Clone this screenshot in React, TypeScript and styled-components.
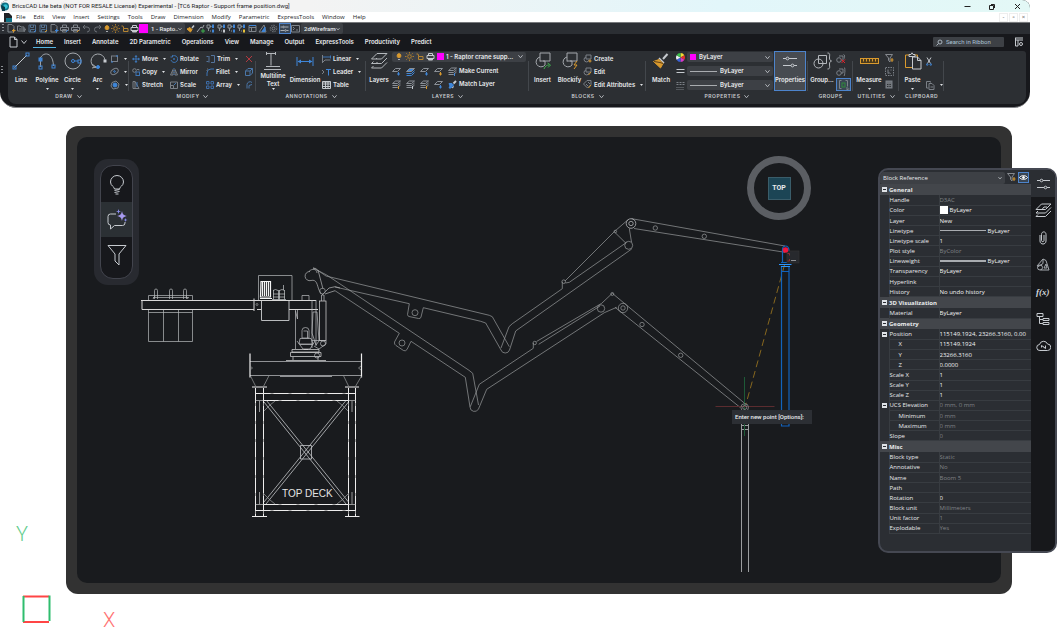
import React from "react";
import styled, { createGlobalStyle, css } from "styled-components";

const W = "#c6cacf";
const B = "#3f86d8";
const O = "#d99a2e";
const G = "#3fae4c";
const R = "#d2363c";

const uiFont = `"Open Sans", "Noto Sans", sans-serif`;
const titleFont = `Roboto, "Open Sans", sans-serif`;
const ribbonFont = `Inter, Roboto, sans-serif`;

const GlobalStyle = createGlobalStyle`
  * { box-sizing: border-box; }
  body { margin: 0; background: #fff; font: 500 6px/8px ${uiFont}; color: #e8eaec; }
  button, select, input { font: inherit; color: inherit; border: 0; padding: 0; margin: 0; background: none; }
  select { appearance: none; outline: 0; min-width: 0; }
  svg { display: block; flex: none; }
`;

const Page = styled.div`
  position: relative;
  min-height: 100vh;
  overflow: hidden;
`;

/* ---------- application window ---------- */

const AppWindow = styled.header`
  margin-right: 28px;
  overflow: hidden;
  background: #17181c;
  border-bottom: 1px solid #85868a;
  border-radius: 8px 8px 16px 16px;
  padding-bottom: 3px;
`;

const TitleBar = styled.div`
  display: flex;
  align-items: center;
  height: 12px;
  padding: 0 8px 0 1px;
  gap: 3px;
  color: #1b1d1f;
  font: 400 6px/8px ${titleFont};
  background: linear-gradient(90deg, #f3f3f3 30%, #e2f6fa 70%, #e3f8f6);
`;

const Spacer = styled.div`
  flex: 1;
`;

const WindowButtons = styled.div`
  display: flex;
  gap: 16px;
`;

const IconButton = styled.button<{ $w?: number; $h?: number; $on?: boolean }>`
  display: flex;
  align-items: center;
  justify-content: center;
  flex: none;
  width: ${(p) => p.$w ?? 9}px;
  height: ${(p) => p.$h ?? 9}px;
  ${(p) =>
    p.$on &&
    css`
      background: #3a4654;
      box-shadow: inset 0 0 0 1px #4d84cc;
    `}
`;

const MenuBar = styled.nav`
  display: flex;
  align-items: center;
  height: 10px;
  padding: 0 2px 0 4px;
  background: #fff;
  color: #1b1d1f;
  font-weight: 400;
`;

const MenuItem = styled.button`
  padding: 0 4px;
`;

const DocButton = styled.button`
  width: 9px;
  height: 9px;
  margin-left: 1px;
  line-height: 6px;
  border: 1px solid #eee;
  color: #555;
`;

const QuickBar = styled.div`
  display: flex;
  align-items: center;
  height: 12px;
  padding-left: 2px;
  border-top: 1px solid #77797c;
  background: #2b2e33;
  font-family: ${titleFont};
`;

const QuickGroup = styled.div<{ $w?: number }>`
  display: flex;
  align-items: center;
  justify-content: space-between;
  width: ${(p) => (p.$w ? `${p.$w}px` : "auto")};
`;

const Grip = styled.div`
  width: 2px;
  height: 9px;
  margin-right: 2px;
  background: repeating-linear-gradient(#8c9095 0 1px, transparent 1px 3px);
`;

const Combo = styled.label<{ $w?: number; $h?: number; $gap?: number }>`
  display: flex;
  align-items: center;
  gap: ${(p) => p.$gap ?? 3}px;
  width: ${(p) => (p.$w ? `${p.$w}px` : "auto")};
  height: ${(p) => p.$h ?? 10}px;
  padding: 0 3px;
  border-radius: 2px;
  background: #3d4045;
  select {
    flex: 1;
    height: 8px;
    line-height: 8px;
  }
`;

const Swatch = styled.span<{ $c: string; $s: number }>`
  flex: none;
  width: ${(p) => p.$s}px;
  height: ${(p) => p.$s}px;
  background: ${(p) => p.$c};
`;

const TabBar = styled.nav`
  display: flex;
  align-items: center;
  height: 17px;
  padding: 0 6px 1px 8px;
  font: 600 6px/8px ${ribbonFont};
`;

const TabStrip = styled.div`
  display: flex;
  gap: 5px;
  margin-left: 4px;
`;

const RibbonTab = styled.button<{ $on?: boolean }>`
  padding: 2px 3px 1px;
  line-height: 8px;
  border-bottom: 1px solid ${(p) => (p.$on ? "#56b4e0" : "transparent")};
`;

const Search = styled.label`
  display: flex;
  align-items: center;
  gap: 3px;
  width: 71px;
  height: 10px;
  padding: 0 2px 0 3px;
  margin-right: 9px;
  border-radius: 1px;
  background: #3d4045;
  font-family: ${titleFont};
  font-weight: 400;
  input {
    min-width: 0;
    flex: 1;
    outline: 0;
  }
  input::placeholder {
    color: #a9c0d4;
    opacity: 1;
  }
`;

const RibbonRow = styled.div`
  display: flex;
  align-items: stretch;
  height: 53px;
  margin-right: 4px;
`;

const RibbonGrip = styled.div`
  width: 8px;
  padding: 15px 0 0 1px;
`;

const Ribbon = styled.div`
  display: flex;
  flex: 1;
  min-width: 0;
  background: #2c2f33;
  border-radius: 3px 3px 8px 8px;
  font: 600 6px/8px ${ribbonFont};
`;

const Group = styled.section<{ $w: number }>`
  display: flex;
  flex-direction: column;
  flex: none;
  width: ${(p) => p.$w}px;
  background: linear-gradient(#43474c, #43474c) right 10px / 1px 30px no-repeat;
`;

const Tools = styled.div<{ $pad?: number }>`
  display: flex;
  height: 40px;
  padding-left: ${(p) => p.$pad ?? 0}px;
`;

const GroupTitle = styled.h2`
  display: flex;
  align-items: center;
  justify-content: center;
  gap: 4px;
  margin: 1px 0 0;
  font: 600 5px/9px ${ribbonFont};
  letter-spacing: 0.5px;
  color: #c9ccd0;
`;

const BigButton = styled.button<{ $w: number; $on?: boolean; $dense?: boolean }>`
  display: flex;
  flex-direction: column;
  align-items: center;
  flex: none;
  width: ${(p) => p.$w}px;
  height: 40px;
  padding-top: 1px;
  font: inherit;
  white-space: nowrap;
  > span {
    margin-top: ${(p) => (p.$dense ? 0 : 6)}px;
  }
  ${(p) =>
    p.$dense &&
    css`
      line-height: 8px;
    `}
  ${(p) =>
    p.$on &&
    css`
      background: #474b51;
      box-shadow: inset 0 0 0 1px #4d84cc;
    `}
`;

const Column = styled.div<{ $w: number; $top?: number }>`
  display: flex;
  flex-direction: column;
  flex: none;
  width: ${(p) => p.$w}px;
  padding-top: ${(p) => p.$top ?? 1}px;
`;

const SmallButton = styled.button`
  display: flex;
  align-items: center;
  gap: 2px;
  height: 13px;
  white-space: nowrap;
  text-align: left;
`;

const Stack = styled.div`
  display: flex;
  flex-direction: column;
  gap: 4px;
`;

const LayerGrid = styled.div`
  display: grid;
  grid-template-columns: repeat(4, 14px) 1fr;
  height: 27px;
  margin-top: 3px;
`;

const StyleRow = styled.div`
  display: flex;
  align-items: center;
  gap: 2px;
`;

const LineSample = styled.span<{ $w: number; $h: number }>`
  flex: none;
  width: ${(p) => p.$w}px;
  height: ${(p) => p.$h}px;
  background: #a9acb0;
`;

/* ---------- drawing area ---------- */

const Monitor = styled.main`
  margin: 18px 46px 35px 66px;
  padding: 11px;
  border-radius: 12px;
  background: #323232;
`;

const Canvas = styled.div`
  position: relative;
  height: 446px;
  border-radius: 10px;
  overflow: hidden;
  background: #191b1e;
`;

const Dock = styled.div`
  position: absolute;
  left: 17px;
  top: 22px;
  padding: 6px;
  border-radius: 14px;
  background: #282a30;
`;

const DockList = styled.div`
  width: 33px;
  padding: 1px 0 6px;
  border: 1px solid #42444d;
  border-radius: 13px;
  background: #17181c;
`;

const DockButton = styled.button<{ $on?: boolean }>`
  display: flex;
  align-items: center;
  justify-content: center;
  width: 100%;
  height: 35px;
  background: ${(p) => (p.$on ? "#2b3034" : "none")};
`;

const ViewRing = styled.div`
  position: absolute;
  right: 190px;
  top: 19px;
  display: flex;
  align-items: center;
  justify-content: center;
  width: 64px;
  height: 64px;
  border: 7px solid #5b5e63;
  border-radius: 50%;
`;

const ViewFace = styled.button`
  width: 23px;
  height: 23px;
  border: 1px solid #3a5d6a;
  background: #1c4555;
  font: 700 7px/21px ${titleFont};
`;

const Prompt = styled.div`
  position: absolute;
  left: 655px;
  top: 273px;
  width: 80px;
  height: 14px;
  padding-left: 3px;
  background: #2c2f34;
  font: 500 6px/13px ${titleFont};
  white-space: nowrap;
`;

const UcsIcon = styled.svg`
  position: absolute;
  left: 14px;
  bottom: 0;
`;

/* ---------- properties panel ---------- */

const PropsPanel = styled.aside`
  position: absolute;
  right: 1px;
  top: 168px;
  display: flex;
  width: 179px;
  height: 385px;
  overflow: hidden;
  border: 2px solid #454852;
  border-radius: 10px;
  background: #2b2e33;
`;

const PropsMain = styled.div`
  flex: 1;
  min-width: 0;
  padding-top: 1px;
`;

const PropsHead = styled.div`
  display: flex;
  align-items: center;
  height: 13px;
`;

const PropTable = styled.table`
  width: 100%;
  height: 350px;
  table-layout: fixed;
  border-collapse: collapse;
  line-height: 8px;
  tr {
    height: 10px;
  }
`;

const Gutter = styled.td`
  padding: 0 0 0 2px;
`;

const Toggle = styled.button`
  display: block;
  width: 5px;
  height: 5px;
  background: linear-gradient(#2b2e33, #2b2e33) 1px 2px / 3px 1px no-repeat #dfe2e6;
`;

const SectionHead = styled.th`
  height: 11px;
  padding: 0;
  text-align: left;
  font-weight: 700;
`;

const SectionRow = styled.tr`
  background: #43464b;
`;

const Name = styled.th<{ $sub?: boolean }>`
  padding: 0 0 0 ${(p) => (p.$sub ? 9 : 0)}px;
  border: 1px solid #383c41;
  border-width: 0 1px 1px 1px;
  text-align: left;
  font-weight: 500;
  white-space: nowrap;
`;

const Value = styled.td<{ $dim?: boolean }>`
  padding: 0;
  border-bottom: 1px solid #383c41;
  color: ${(p) => (p.$dim ? "#808387" : "#f2f4f5")};
  white-space: nowrap;
  overflow: hidden;
  > span {
    display: flex;
    align-items: center;
    gap: 2px;
  }
`;

const SideTabs = styled.nav`
  display: flex;
  flex-direction: column;
  width: 24px;
  background: #17181b;
`;

const SideTab = styled.button<{ $on?: boolean }>`
  display: flex;
  align-items: center;
  justify-content: center;
  height: 27px;
  background: ${(p) => (p.$on ? "#2b2e33" : "none")};
`;

/* ---------- icons ---------- */

type IcoProps = { w: number; h?: number; s?: string; vb?: string; sw?: number; children: React.ReactNode };
const Ico = ({ w, h = w, s = W, vb, sw = 1, children }: IcoProps) => (
  <svg width={w} height={h} viewBox={vb ?? `0 0 ${w} ${h}`} fill="none" stroke={s} strokeWidth={sw} aria-hidden="true">
    {children}
  </svg>
);

const Chevron = ({ w = 5 }: { w?: number }) => (
  <Ico w={w} vb="0 0 6 6">
    <path d="M.5 1.500 3 4.500 5.500 1.500" />
  </Ico>
);
const Caret = () => (
  <Ico w={3} h={2} s="none">
    <path d="M0 0h3L1.500 2z" fill="#dfe2e5" />
  </Ico>
);

const icons = {
  line: (
    <Ico w={18}>
      <path d="M2.500 15.500 15 3" />
      <g stroke={B}>
        <rect x="1" y="14" width="3" height="3" />
        <rect x="14" y="1" width="3" height="3" />
      </g>
    </Ico>
  ),
  polyline: (
    <Ico w={18}>
      <path d="M2.500 5v10M3 5c3-5 12-5 12.500 9" stroke="#9aa0a6" />
      <g stroke={B}>
        <rect x="1" y="6" width="3" height="3" fill={B} />
        <rect x="1" y="14" width="3" height="3" />
        <rect x="14" y="13" width="3" height="3" />
      </g>
    </Ico>
  ),
  circle: (
    <Ico w={18}>
      <circle cx="9" cy="9" r="8" stroke="#a4a8ad" />
      <g stroke={B}>
        <circle cx="9" cy="9" r="1.500" />
        <path d="M10.500 9H14" />
        <rect x="14" y="8" width="3" height="3" />
      </g>
    </Ico>
  ),
  arc: (
    <Ico w={18}>
      <path d="M9 16A7 7 0 1 1 16 8M3 12l4 3-4 1" stroke="#a4a8ad" />
      <circle cx="9" cy="15" r="1.500" fill={B} stroke={B} />
      <rect x="15" y="8" width="2" height="2" fill={W} />
    </Ico>
  ),
  rect: (
    <Ico w={9} s="#7b8087">
      <rect x="1.500" y="2" width="6" height="5.500" />
      <path d="M1 8h2M6 2h2" stroke={B} />
    </Ico>
  ),
  ellipse: (
    <Ico w={9} s="#7b8087">
      <ellipse cx="4.500" cy="4.500" rx="4" ry="2.600" transform="rotate(-30 4.500 4.500)" />
      <circle cx="4.500" cy="4.500" r=".8" stroke={B} />
    </Ico>
  ),
  hatch: (
    <Ico w={10} s="#7b8087">
      <path d="M2 2.500 6 1l3 3-1 4-5 1-2-3z" />
      <circle cx="5" cy="5" r="2" fill={B} stroke={B} />
    </Ico>
  ),
  move: (
    <Ico w={8} s="#3d75b5">
      <path d="M4 .5v7M.5 4h7" />
      <path d="M4 0 2.500 2h3zM4 8 2.500 6h3zM0 4l2-1.500v3zM8 4 6 2.500v3z" fill="#3d75b5" stroke="none" />
    </Ico>
  ),
  copy: (
    <Ico w={8} s="#7b8087">
      <circle cx="2.500" cy="2.500" r="1.800" />
      <rect x="4" y="4" width="3.500" height="3.500" stroke="#3d75b5" />
      <path d="M5 1.500h2v1" />
    </Ico>
  ),
  stretch: (
    <Ico w={8} s="#7b8087">
      <path d="M1 7.500v-7h2v7zM3 .5l4 7H1" />
      <path d="M5 1v5" stroke="#3d75b5" />
    </Ico>
  ),
  rotate: (
    <Ico w={8} s="#3d75b5">
      <path d="M2 1.500A3.400 3.400 0 1 1 1 5M.5 2h2V.2" />
      <circle cx="4" cy="4" r=".6" />
    </Ico>
  ),
  mirror: (
    <Ico w={8} s="#7b8087">
      <path d="M3 1.500v5.500H.5zM5 1.500v5.500h2.500z" />
      <path d="M4 0v8" stroke="#3d75b5" strokeDasharray="1 1" />
    </Ico>
  ),
  scale: (
    <Ico w={8} s="#7b8087">
      <path d="M.5 1h7v6.500h-7zM.5 4.500h3v3" />
      <path d="M4 4l2-2" stroke="#3d75b5" />
    </Ico>
  ),
  trim: (
    <Ico w={9} h={8} s="#54749c">
      <path d="M3 1v6.500M.5 1.500h2M.5 6.500h2M5 .5h3.500v7H5" />
    </Ico>
  ),
  fillet: (
    <Ico w={8} s="#3d75b5">
      <path d="M1 8V5a4 4 0 0 1 4-4h3" />
      <path d="M1 3V1h2" stroke="#777" strokeDasharray="1 1" />
    </Ico>
  ),
  array: (
    <Ico w={8} s="#3d6da8">
      <path d="M.5.500h2.500v2.500H.5zM5 .5h2.500v2.500H5zM.5 5h2.500v2.500H.5zM5 5h2.500v2.500H5z" />
    </Ico>
  ),
  erase: (
    <Ico w={8} s="#b2393f">
      <path d="M1 1l6 6M7 1 1 7" />
    </Ico>
  ),
  cube: (
    <Ico w={8} s="#4a76a8">
      <path d="M.5 3h4.500v4.500H.5zM.5 3l2.500-2.500h4.500V5L5 7.500M5 3 7.500.500" />
    </Ico>
  ),
  pipe: (
    <Ico w={8} s="#4a76a8">
      <path d="M2 7.500V3.500a3 3 0 0 1 5-2M4 7.500V4.500l3-1" />
    </Ico>
  ),
  mtext: (
    <Ico w={18} h={20}>
      <path d="M2 1.500h10M2.500 0v3M11.500 0v3M7 1.500v12M2 14.500h14M0 17.500h17" stroke="#b4b8bc" />
    </Ico>
  ),
  dimension: (
    <Ico w={18} s={B}>
      <path d="M1 5v9M17 5v9M2 9.500h14" />
      <path d="M1.500 9.500 5 7.500v4zM16.500 9.500 13 7.500v4z" fill={B} stroke="none" />
    </Ico>
  ),
  linear: (
    <Ico w={9} h={8} s="#7b8087">
      <path d="M.5 0v8M.5 7.500 3 5h5.500" />
      <path d="M1 2h7.500M8.500.500v3" stroke="#3d75b5" />
    </Ico>
  ),
  leader: (
    <Ico w={9} h={8} s={B}>
      <path d="M4 1.500h5M6.500 1.500v6" />
      <path d="M0 2l2 2-2 2" stroke="#7b8087" />
    </Ico>
  ),
  table: (
    <Ico w={9} h={8}>
      <path d="M.5.500h8v7h-8zM.5 3h8M.5 5.500h8M3.500.500v7M6 .5v7M.5 1h8" />
    </Ico>
  ),
  layers: (
    <Ico w={18} h={18} s="#b4b8bc">
      <path d="M7 1.500h10L11.500 7H1.500zM3.500 9.500 1.500 11.500h10L17 6M3.500 14 1.500 16h10L17 10.500M7 6l-1 1M8 11H6" />
    </Ico>
  ),
  insert: (
    <Ico w={18} s="#a4a8ad">
      <path d="M6 9.500V1h10v8H9M6 5a5 5 0 1 0 5 8V9H6" />
      <path d="M10 17c1-3 3-4 5-4M13.500 11l3 2-2.500 2.500" stroke={G} />
    </Ico>
  ),
  blockify: (
    <Ico w={18} s="#a4a8ad">
      <path d="M6 9.500V1h10v8H9M6 5a5 5 0 1 0 5 8V9H6" />
      <path d="M16 9l-3 4h3l-3 4" stroke={O} />
    </Ico>
  ),
  create: (
    <Ico w={9} s="#7b8087">
      <path d="M3 5V1h5v4zM3 3a2.500 2.500 0 1 0 3 3" />
      <path d="M7 5.500v3M5.500 7h3" stroke={O} />
    </Ico>
  ),
  edit: (
    <Ico w={9} s="#7b8087">
      <path d="M3 5V1h5v4zM3 3a2.500 2.500 0 1 0 3 3" />
      <path d="M8 5 5.500 8" stroke={O} />
    </Ico>
  ),
  attrs: (
    <Ico w={9} s="#7b8087">
      <path d="M.5 4 4 .5h4v4L4.500 8zM3 4l2 2M5 2l2 2" />
      <path d="M8 5 5.500 8" stroke={O} />
    </Ico>
  ),
  match: (
    <Ico w={18}>
      <path d="M15.500 2 11 7" strokeWidth={2} />
      <path d="M7 6l5 5" strokeWidth={1.500} />
      <path d="M1.500 9.500 7 7.500l4 4-2.500 4.500z" fill={O} stroke={O} />
      <path d="M2 9.500l6 1 3 1" stroke="#604015" />
    </Ico>
  ),
  sliders: (
    <Ico w={16} h={18}>
      <path d="M1 6.500h3M7 6.500h8M1 13.500h8M12 13.500h3" />
      <circle cx="5.500" cy="6.500" r="1.400" />
      <circle cx="10.500" cy="13.500" r="1.400" />
    </Ico>
  ),
  group: (
    <Ico w={19} h={18} s="#b4b8bc">
      <circle cx="5.500" cy="11.500" r="4.500" />
      <path d="M5.500 3.500h8v8h-8zM14.500 1c3 0 2 2 2 5 0 1.500.5 2.500 2 3-1.500.5-2 1.500-2 3 0 3 1 5-2 5" />
    </Ico>
  ),
  ungroup: (
    <Ico w={10} s="#7b8087">
      <circle cx="3" cy="6" r="2.300" />
      <path d="M3 2h4v4M7.500.500c1.500 0 1 3 1 4" />
      <path d="M5.500 5.500l3.500 3.500M9 5.500 5.500 9" stroke="#e0242c" />
    </Ico>
  ),
  groupEdit: (
    <Ico w={10} s="#7b8087">
      <circle cx="3" cy="6" r="2.300" />
      <path d="M3 2h4v4H5M8 .5c1.500 0 .5 4 1 4.500-.5 0 0 3-1 4" />
    </Ico>
  ),
  groupOn: (
    <Ico w={12} s="#7d8288">
      <path d="M3.500 1.500H1.500v8h2M7.500 1.500h2v6M9 8v3l1-1h1.500" />
      <rect x="4" y="4" width="3" height="4" stroke="#2f8a3a" />
    </Ico>
  ),
  measure: (
    <Ico w={19} h={18} s={O}>
      <rect x=".5" y="6.500" width="18" height="5" fill="#4a3a1c" />
      <path d="M3.500 7v2.500M6.500 7v2.500M9.500 7v2.500M12.500 7v2.500M15.500 7v2.500" />
    </Ico>
  ),
  filterBolt: (
    <Ico w={9} s="#85898e">
      <path d="M.5.500h7L5 4v4L3.500 6.500V4z" />
      <path d="M7 4v4M5.500 6h3" stroke={O} />
    </Ico>
  ),
  selectBox: (
    <Ico w={9} s="#7b8087">
      <rect x=".5" y=".5" width="8" height="8" strokeDasharray="1.500 1" />
      <path d="M3 2.500v4l1.200-1L5.500 7M5.500 3h1" />
    </Ico>
  ),
  calc: (
    <Ico w={8} h={9} s="#7b8087">
      <rect x="1" y="1" width="6" height="7" fill="#6f7378" />
      <path d="M2 4.500h4M2 6.500h4" stroke="#2c2f33" strokeDasharray="1 .6" />
    </Ico>
  ),
  paste: (
    <Ico w={18}>
      <path d="M8 15.500H1.500V3H5M11 3h2.500v2" stroke={O} />
      <path d="M5 4.500V2.500h2L8 .8l1 1.700h2v2z" />
      <path d="M8.500 5h5l3.500 3.500V17H8.500zM13.500 5v3.500H17" />
    </Ico>
  ),
  cut: (
    <Ico w={6} h={9}>
      <path d="M1 .5l3.500 6M5 .5l-3.500 6" />
      <circle cx="1.200" cy="7.500" r=".8" stroke={B} />
      <circle cx="4.800" cy="7.500" r=".8" stroke={B} />
    </Ico>
  ),
  copyClip: (
    <Ico w={9} s="#7b8087">
      <path d="M2.500 7H.5V.5h4v1M3 2.500h3l2 2v4H3zM4.500 6H7" />
    </Ico>
  ),
  wheel: (
    <Ico w={9} s="none">
      <path d="M4.500 4.500V0A4.500 4.500 0 0 1 8.400 2.300z" fill="#f2dc35" />
      <path d="M4.500 4.500 8.400 2.300A4.500 4.500 0 0 1 8.400 6.700z" fill="#e0352c" />
      <path d="M4.500 4.500 8.400 6.700A4.500 4.500 0 0 1 4.500 9z" fill="#d838c8" />
      <path d="M4.500 4.500V9A4.500 4.500 0 0 1 .6 6.700z" fill="#3b62d9" />
      <path d="M4.500 4.500.6 6.700A4.500 4.500 0 0 1 .6 2.300z" fill="#e8edf0" />
      <path d="M4.500 4.500.6 2.300A4.500 4.500 0 0 1 4.500 0z" fill="#3cc24a" />
    </Ico>
  ),
  weight: (
    <Ico w={9}>
      <path d="M.5 2.500h8M.5 5.500h8" />
    </Ico>
  ),
  ltype: (
    <Ico w={9} s="#7b8087">
      <path d="M.5 1.500h8M.5 3.500h8" strokeDasharray="2 1" />
      <path d="M.5 6.500h8M.5 8.500h8" strokeDasharray="1 1" />
    </Ico>
  ),
  bulb: (
    <Ico w={8} h={9} s={O} sw={0.8}>
      <path d="M2.800 5.500C1.500 4.500 2 1.500 4 1.500s2.500 3 1.200 4z" fill={O} />
      <path d="M3 7.500h2" stroke={W} />
    </Ico>
  ),
  sun: (
    <Ico w={9} s="#c48a2a" sw={0.8}>
      <circle cx="4.500" cy="4.500" r="1.800" />
      <path d="M4.500 0v1.500M4.500 7.500V9M0 4.500h1.500M7.500 4.500H9M1.300 1.300l1 1M6.700 6.700l1 1M1.300 7.700l1-1M6.700 2.300l1-1" />
    </Ico>
  ),
  lock: (
    <Ico w={8} h={9} s="#b58432">
      <path d="M2.500 4.500h4.500v3H2.500zM2.500 4.500V3a1.500 1.500 0 0 0-2-1" />
    </Ico>
  ),
  printer: (
    <Ico w={9}>
      <path d="M2.500 3V1.500h4V3M1 3.500h7v3H1z" />
      <path d="M2.500 6.500h4v1.500h-4z" fill={W} />
    </Ico>
  ),
  newDoc: (
    <Ico w={9} h={12}>
      <path d="M1 1h4.500L8 3.500V11H1zM5.500 1v2.500H8" />
    </Ico>
  ),
  layout: (
    <Ico w={10}>
      <path d="M1 1h8M1 3h8M1.500 1v8H4M4 3v6" />
      <circle cx="7" cy="7" r="1.500" />
    </Ico>
  ),
  lens: (
    <Ico w={7} s="#a9b4be">
      <circle cx="4" cy="3" r="2" />
      <path d="M2.500 4.500.500 6.500" />
    </Ico>
  ),
};

const layerIcon = (accent: string, filled = false) => (
  <Ico w={9} s="#8b9097">
    <path d="M.5 4.500h5L8.500 1.500h-5z" fill={filled ? accent : "none"} />
    {filled && <path d="M.5 6.500h5l3-3" stroke={accent} />}
    <path d={filled ? "M.5 8.500h5l3-3" : "M6.500 5v3.500M5 7h3"} stroke={accent} />
  </Ico>
);
const stackIcon = (accent: string) => (
  <Ico w={9} s="#8b9097">
    <path d="M.5 3.500h5L8.500 1h-5zM.5 5.500h5l3-2.500M.5 7.500h5l3-2.500" />
    <path d="M6.500 6v3" stroke={accent} />
  </Ico>
);
const pageIcon = (accent: string) => (
  <Ico w={9} s="#7f848a">
    <path d="M1 .5h4L7 2.500V8H1z" />
    <path d="M5 6.500h3.500M6.500 5v3.500" stroke={accent} />
  </Ico>
);
const folderIcon = (
  <Ico w={9} s="#7f848a">
    <path d="M.5 2h2.500l1 1h3v4H.5zM2 5h6.500L7 8" />
  </Ico>
);
const saveIcon = (accent: string) => (
  <Ico w={9} s="#54718f">
    <path d="M1 1h6.500v7H1zM2.500 1v2.500h3V1M2.500 8V5.500h4" />
    <path d="M6 8l2-2" stroke={accent} />
  </Ico>
);
const printIcon = (accent: string) => (
  <Ico w={9} s="#7f848a">
    <path d="M2.500 3V1h4v2M.5 3.500h8v3h-8zM2.500 5.500h4V8h-4z" />
    <path d="M6 8l2-2" stroke={accent} />
  </Ico>
);
const undoIcon = (flip: boolean) => (
  <Ico w={9} s="#6c7177">
    <path transform={flip ? "matrix(-1 0 0 1 9 0)" : undefined} d="M3 1 1 3l2 2M1 3h4a2.500 2.500 0 0 1 0 5" />
  </Ico>
);
const snapIcon = (accent: string) => (
  <Ico w={9} s="#8d9298">
    <path d="M1 1h3v3H1zM4 2.500h1.500M2.500 4v3M4 7h1" />
    <path d="M7 .5v3.500" stroke={B} strokeWidth="2" />
    <path d="M7 5.500v3" stroke={accent} strokeWidth="2" />
  </Ico>
);
const gearIcon = (
  <Ico w={9} s="#7f848a">
    <circle cx="4.500" cy="4.500" r="3.300" strokeDasharray="1.500 1" />
    <circle cx="4.500" cy="4.500" r="1.500" />
  </Ico>
);
const panelIcon = (
  <Ico w={9} s="#7f848a">
    <path d="M1 1.500h7v6H1zM1 3.500h7M3.500 3.500v4" />
    <path d="M1 1.500h7" stroke={B} />
  </Ico>
);
const triIcon = (
  <Ico w={9} s="#7f848a">
    <path d="M1 8 6 1l2 7z" />
    <path d="M4 7.500 7 3v4.500z" fill={B} stroke={B} />
  </Ico>
);
const slidersSmall = (
  <Ico w={9} s="#a9adb2">
    <path d="M.5 3h2M4.500 3h4M.5 6.500h4M6.500 6.500h2" />
    <circle cx="3.500" cy="3" r=".8" />
    <circle cx="5.500" cy="6.500" r=".8" />
  </Ico>
);
const consoleIcon = (
  <Ico w={9} s="#7f848a">
    <path d="M.5 1.500h8v6.500h-8zM2 3l1.500 1.500L2 6M5 6h2" />
  </Ico>
);
const brushIcon = (
  <Ico w={9} s={W}>
    <path d="M8 1.500 6 4" strokeWidth="1.500" />
    <path d="M1 5l3-1.500L6 5.500 4.500 8z" fill={O} stroke={O} />
  </Ico>
);
const matchLayerIcon = (
  <Ico w={9} s={W}>
    <path d="M8 1 5.500 3.500" strokeWidth="2" />
    <path d="M1 3.500h3l1.500 1.500L3 8H1l1-2z" fill={B} stroke={B} />
    <path d="M4 8l2-1.500" />
  </Ico>
);
const eyedropIcon = (
  <Ico w={9} s="#a4a8ad">
    <path d="M1 8l4-5 1.500 1L8 1" />
    <path d="M5 7h4M7 5v4" stroke={G} />
  </Ico>
);

const eyeIcon = (
  <Ico w={9} h={7} s="#fff">
    <path d="M.5 3.500C2 1 7 1 8.500 3.500 7 6 2 6 .5 3.500z" />
    <circle cx="4.500" cy="3.500" r="1" fill="#fff" />
  </Ico>
);

const sideIcons: [string, React.ReactNode][] = [
  [
    "Properties",
    <Ico w={15} h={12}>
      <path d="M1 2.500h3M7 2.500h7M1 9.500h7M11 9.500h3" />
      <circle cx="5.500" cy="2.500" r="1.300" />
      <circle cx="9.500" cy="9.500" r="1.300" />
    </Ico>,
  ],
  [
    "Layers",
    <Ico w={17} h={15}>
      <path d="M6.500 1H16l-5.500 5.500H1zM3 8 1 10h9.500L16 4.500M3 11.500 1 13.500h9.500L16 8M7 6.500 9 4h3" />
    </Ico>,
  ],
  [
    "Attachments",
    <Ico w={8} h={14}>
      <path d="M1 4v6c0 4 6 4 6 0V3.500C7 0 2.500 0 2.500 3.500V9.500c0 1.500 2.500 1.500 2.500 0V4" />
    </Ico>,
  ],
  [
    "Materials",
    <Ico w={14} h={13} s="#a4a8ad">
      <path d="M1 8 7 1l3 1.500L13 12H4.500M7 1v4.500L1.500 9" />
      <circle cx="4" cy="9.500" r="2.500" />
      <path d="M8 10l2-4 1 4z" />
    </Ico>,
  ],
  ["Parameters", null],
  [
    "Structure",
    <Ico w={14} h={14}>
      <path d="M1 1.500h6v3H1zM3.500 4.500v7H7M3.500 7.500H7M7 6.500h6v2H7zM7 10.500h6v2H7z" />
    </Ico>,
  ],
  [
    "Cloud",
    <Ico w={15} h={12}>
      <path d="M4 10.500a3 3 0 0 1-.5-6 4.200 4.200 0 0 1 8-.5 3.200 3.200 0 0 1 0 6.500z" />
      <path d="M5.500 7.500V5.500l3 2M9.500 5.500v3l-2-1.500" />
    </Ico>,
  ],
];

/* ---------- data ---------- */

const menus = ["File", "Edit", "View", "Insert", "Settings", "Tools", "Draw", "Dimension", "Modify", "Parametric", "ExpressTools", "Window", "Help"];
const tabs = ["Home", "Insert", "Annotate", "2D Parametric", "Operations", "View", "Manage", "Output", "ExpressTools", "Productivity", "Predict"];

type Prop = { name: string; value?: string; dim?: boolean; sub?: boolean; toggle?: boolean; head?: boolean; kind?: "color" | "thin" | "thick" };
const props: Prop[] = [
  { name: "General", head: true },
  { name: "Handle", value: "D3AC", dim: true },
  { name: "Color", value: "ByLayer", kind: "color" },
  { name: "Layer", value: "New" },
  { name: "Linetype", value: "ByLayer", kind: "thin" },
  { name: "Linetype scale", value: "1" },
  { name: "Plot style", value: "ByColor", dim: true },
  { name: "Lineweight", value: "ByLayer", kind: "thick" },
  { name: "Transparency", value: "ByLayer" },
  { name: "Hyperlink" },
  { name: "History", value: "No undo history" },
  { name: "3D Visualization", head: true },
  { name: "Material", value: "ByLayer" },
  { name: "Geometry", head: true },
  { name: "Position", value: "115149.1924, 23266.3160, 0.00", toggle: true },
  { name: "X", value: "115149.1924", sub: true },
  { name: "Y", value: "23266.3160", sub: true },
  { name: "Z", value: "0.0000", sub: true },
  { name: "Scale X", value: "1" },
  { name: "Scale Y", value: "1" },
  { name: "Scale Z", value: "1" },
  { name: "UCS Elevation", value: "0 mm, 0 mm", dim: true, toggle: true },
  { name: "Minimum", value: "0 mm", dim: true, sub: true },
  { name: "Maximum", value: "0 mm", dim: true, sub: true },
  { name: "Slope", value: "0", dim: true },
  { name: "Misc", head: true },
  { name: "Block type", value: "Static", dim: true },
  { name: "Annotative", value: "No", dim: true },
  { name: "Name", value: "Boom 5", dim: true },
  { name: "Path" },
  { name: "Rotation", value: "0" },
  { name: "Block unit", value: "Millimeters", dim: true },
  { name: "Unit factor", value: "1", dim: true },
  { name: "Explodable", value: "Yes", dim: true },
];

/* ---------- pieces ---------- */

const CaretBelow = styled.div<{ $gap: number }>`
  margin-top: ${(p) => p.$gap}px;
`;

const Big = ({ icon, label, w, caret, on, dense }: { icon: React.ReactNode; label: React.ReactNode; w: number; caret?: boolean; on?: boolean; dense?: boolean }) => (
  <BigButton $w={w} $on={on} $dense={dense}>
    {icon}
    <span>{label}</span>
    {caret && (
      <CaretBelow $gap={dense ? 0 : 4}>
        <Caret />
      </CaretBelow>
    )}
  </BigButton>
);

const CaretGap = styled.span`
  margin-left: 3px;
`;

const Small = ({ icon, label, caret }: { icon: React.ReactNode; label?: string; caret?: boolean }) => (
  <SmallButton aria-label={label ?? "Tool"}>
    {icon}
    {label && <span>{label}</span>}
    {caret && (
      <CaretGap>
        <Caret />
      </CaretGap>
    )}
  </SmallButton>
);

const Title = ({ children, menu = true }: { children: string; menu?: boolean }) => (
  <GroupTitle>
    {children}
    {menu && <Chevron w={5} />}
  </GroupTitle>
);

const Quick = ({ items, on, w }: { items: React.ReactNode[]; on?: number; w: number }) => (
  <QuickGroup $w={w}>
    {items.map((it, i) => (
      <IconButton key={i} $w={on === i ? 12 : 10} $h={11} $on={on === i} aria-label={`Quick tool ${i + 1}`}>
        {it}
      </IconButton>
    ))}
  </QuickGroup>
);

const towerLines = "M255.500 388V516M263.500 388V516M348.500 388V516M355.500 388V516M255.500 393.500H356M263.500 400.500H348.500M263.500 504.500H348.500M255.500 510.500H356";

const Drawing = () => (
  <svg width="924" height="446" viewBox="77 137 924 446" fill="none" stroke="#9a9c9e" strokeWidth=".7" role="img" aria-label="Crane elevation drawing">
    {/* upper boom position */}
    <path d="M318 270.500 326 276 489.300 315.300 492.300 316.700 509.300 346.700M335 287 409.300 303.700 407.500 314.500Q407.500 316 409 316.500L418.500 318.500Q420.500 319 421 317L423.300 307.700 480.700 321.300 485.700 323 501 350M501 350A4.500 4.500 0 0 0 509.500 350L515.700 331 518 329.300 631.700 249M501 348 509 326.700 512.300 323.700 562.300 288.700V281.700M565.500 283 569.300 282.300 626.700 242.300M565 281 615 231M615 231 628.300 219.500M615 232.500 625.700 243M629.300 228.500 631.500 242M631.700 218.700 785 246M634 228.500 785 252.300" />
    <circle cx="415" cy="312.700" r="3" />
    <circle cx="563.700" cy="281.700" r="1.800" />
    <circle cx="628.700" cy="245.300" r="4" />
    <circle cx="615.300" cy="231.500" r="1.300" />
    <circle cx="631" cy="223.500" r="4.800" stroke="#c4c6c8" />
    <circle cx="631" cy="223.500" r="2.200" stroke="#c4c6c8" />
    <circle cx="655.300" cy="228" r="2.200" />
    <circle cx="704.300" cy="236.300" r="2.200" />
    {/* lower boom position */}
    <path d="M313 268 326.700 275 469 370.300 472.700 373.300 478.500 405M335 290.700 399.300 333.300 394.500 342Q394 344.500 396 345.500L403.500 350.500Q405.500 351.500 407 349.500L411 341.300 465.300 377.300 470 407A4.500 4.500 0 0 0 478.500 409L486.700 389.300 604.300 312.700 616.700 307.300M470.300 406.700 479.300 384.300 533.300 348.300V343M538.700 344.300 600 306M536.500 341.500 601.700 303.300 612.300 293.300 746.700 405M615 307.300 740 407.300" />
    <circle cx="402" cy="343" r="3" />
    <circle cx="534.700" cy="343" r="1.700" />
    <circle cx="601" cy="308.500" r="3.700" />
    <circle cx="612.300" cy="294" r="1.500" />
    <circle cx="623" cy="308" r="4.700" />
    <circle cx="623" cy="308" r="2.200" />
    <circle cx="642" cy="324.500" r="2.200" />
    <circle cx="680.700" cy="355.300" r="2.200" />
    {/* boom root */}
    <path d="M318 270.500A6 6 0 0 0 313 268M310 271.500A4.600 4.600 0 1 0 311 280.500C317 279 317 285 319 290L321 294M309 271.500C312 268 317 269 317 273M318 270 323 289M322 295 329 288 335 286.700 340 288M325 294 335 290.700" stroke="#b4b6b8" />
    <circle cx="322.500" cy="291" r="2.800" />
    {/* counterweight and beam */}
    <g stroke="#b9bbbd">
      <path d="M148.500 310V341.500H192.500V310M163.500 310V341.500M178.500 310V341.500M148.500 312.500H192.500M148.500 300V295.500H192.500V300" />
      <path d="M154.500 299V290.500a1.500 1.500 0 0 1 3 0V299M169.500 299V290.500a1.500 1.500 0 0 1 3 0V299M183.500 299V290.500a1.500 1.500 0 0 1 3 0V299M153 299l2-3M188 299l-2-3M153 297.500H189" />
      <path d="M258.500 300V275.500H292V300" />
      <path d="M261.500 301V320.500H289V301" strokeWidth="1" />
    </g>
    <g stroke="#d8d8d8" strokeWidth="1">
      <path d="M254 300.500H142V309.500H254M254 298.500V311M254 300.500H316M257 309.500H261M289 309.500H318M141 300.500H262" />
    </g>
    <circle cx="257" cy="304.500" r="1" />
    <path d="M262.500 281V296M264.500 281V296M266.500 281V296M268.500 281V296M261 281.500H270.500V297H260.500zM260 298.500H272" stroke="#f4f4f4" strokeWidth="1.200" />
    <path d="M273.500 290V299.500M278.500 290V299.500M279.500 290V299.500M284.500 290V299.500M273 290.500q2.500-2 5 0M279.500 290.500q2.500-2 5 0M273 294H285M273 297H285M283.500 285V290M272 299.500H286" stroke="#c6c8ca" />
    {/* slewing column */}
    <g stroke="#bdbfc1">
      <path d="M295.500 310V349M297.500 310V319L295.500 311M302 300V295.500H309V300M312 300V348M316 300V346M313 312H317L319 341 316 345 312 333z" />
      <rect x="319.500" y="301" width="6.500" height="39.500" stroke="#dcdcdc" />
      <path d="M321.500 301V295h2.500V301M312 340.500H326V344L319 349 314 346" />
      <path d="M302 338V330.500q0-3 3.500-3t3.500 3V338zM303.500 331H307.500V338M300 338.500H311L313 344H299zM297 341 303 349H310L315 341M300 344.500H313M304 349.500H308" />
      <circle cx="323" cy="343.500" r="2.500" />
      <path d="M292 349.500H319V352H292zM290.500 352.500H321V356.500H290.500zM293 357V360M318 357V360M286 360.500H326" stroke="#e0e0e0" />
      <circle cx="317" cy="355.500" r="2.500" />
    </g>
    {/* deck */}
    <path d="M250 361.500H361.500M250 375.500H361.500M280 376.500H332" stroke="#c4c6c8" />
    <path d="M250 353.500V377.500M361.500 353.500V377.500M252 387H267M345 387H359M252 516.500H267M345 516.500H359.500" stroke="#eee" strokeWidth="1.200" />
    <path d="M250.500 376 255.500 386M269 375.700 263.700 386M343.500 375.700 348.500 386M361.500 376 355.700 386M250 366l2.500 2-2.500 2M361 366l-2.500 2 2.500 2" />
    {/* lattice tower */}
    <path d={towerLines} stroke="#a8a8a8" strokeWidth="1" />
    <path d={towerLines} stroke="#ededed" strokeWidth="1" strokeDasharray="15 3" />
    <path d="M259.500 401V412M352 401V412M259.500 492V504M352 492V504M255.500 400.500H263.500M348.500 400.500H356M255.500 504.500H263.500M348.500 504.500H356" stroke="#c8c8c8" />
    <path d="M264 402 346 504M266.500 400.500 348.500 502M348.500 402 266 504M346 400.500 264 502M300.500 445.500H311.500V459H300.500z" stroke="#c2c4c6" strokeWidth=".8" />
    <path d="M264 411 270 405 275 401M348 411 342 405 337 401M264 494 270 500 275 504M348 494 342 500 337 504" />
    <text x="282" y="497" fill="#e4e4e4" stroke="none" fontFamily="Liberation Sans, sans-serif" fontSize="10" fontWeight="400">TOP DECK</text>
    {/* support posts */}
    <path d="M741.500 424V572M748.500 424V572M741 425.500H749M741 429.500H749" stroke="#9b9d9f" strokeWidth="1" />
    <path d="M784.500 265 746 404" stroke="#86671f" strokeWidth="1" strokeDasharray="7 4" />
    <path d="M744.500 377V436" stroke="#1d5a37" strokeWidth="1" />
    <path d="M715.500 406.500H774.500" stroke="#5b2c2f" strokeWidth="1" />
    <circle cx="744.700" cy="407.500" r="3.800" />
    <circle cx="744.700" cy="407.500" r="2" />
    <g stroke="#1263bd" strokeWidth="1.200">
      <path d="M781.500 266V426H789V266M781.500 271.500H789M782.500 262V250q0-4 3-4t3.500 4V262M781 262.500H790" />
      <path d="M779 264.500H791.500M781 266.500H790" stroke="#2b95ff" />
    </g>
    <rect x="787" y="251" width="12" height="12" fill="#27292d" stroke="#333" />
    <path d="M787.500 253.500h2v2M787.500 261h2v-2" stroke="#b0323a" />
    <path d="M791 260.500H796" stroke="#8d9094" strokeWidth="1" />
    <circle cx="785.500" cy="250" r="2.800" fill="#f0163f" stroke="none" />
  </svg>
);

export default function App() {
  return (
    <Page>
      <GlobalStyle />
      <AppWindow>
        <TitleBar>
          <Ico w={8} h={9} s="none">
            <circle cx="4" cy="4.500" r="4" fill="#0f6f84" />
            <circle cx="4.500" cy="4.500" r="2.200" fill="#35c3d6" />
            <path d="M0 3 4 5v4H1z" fill="#0b3d4b" />
          </Ico>
          <span>BricsCAD Lite beta (NOT FOR RESALE License) Experimental - [TC6 Raptor - Support frame position.dwg]</span>
          <Spacer />
          <WindowButtons>
            <IconButton aria-label="Minimize">
              <Ico w={7} s="#222">
                <path d="M.5 3.500h6" />
              </Ico>
            </IconButton>
            <IconButton aria-label="Restore">
              <Ico w={7} s="#222">
                <path d="M.5 2.500h4v4h-4zM2 1.500h3.500V5" />
              </Ico>
            </IconButton>
            <IconButton aria-label="Close">
              <Ico w={7} s="#222">
                <path d="M1 1l5 5M6 1 1 6" />
              </Ico>
            </IconButton>
          </WindowButtons>
        </TitleBar>
        <MenuBar>
          <Ico w={8} h={9} s="none">
            <path d="M0 0h5l3 3v6H0z" fill="#1f2226" />
            <path d="M2 5h6v4H2z" fill="#117285" />
          </Ico>
          {menus.map((m) => (
            <MenuItem key={m}>{m}</MenuItem>
          ))}
          <Spacer />
          <DocButton aria-label="Minimize drawing">-</DocButton>
          <DocButton aria-label="Restore drawing">▫</DocButton>
          <DocButton aria-label="Close drawing">×</DocButton>
        </MenuBar>
        <QuickBar>
          <Grip />
          <Quick w={96} items={[pageIcon(O), folderIcon, saveIcon(B), saveIcon(O), pageIcon(B), printIcon(B), printIcon(O), undoIcon(false), undoIcon(true)]} />
          <QuickGroup $w={46}>
            <IconButton aria-label="Layer on">{icons.bulb}</IconButton>
            <IconButton aria-label="Layer thaw">{icons.sun}</IconButton>
            <IconButton aria-label="Layer unlock">{icons.lock}</IconButton>
            <IconButton aria-label="Layer plot">{icons.printer}</IconButton>
            <Swatch $c="#ff00ff" $s={9} />
          </QuickGroup>
          <Combo $w={37} $h={11} $gap={0}>
            <select aria-label="Layer">
              <option>1 - Rapto...</option>
            </select>
            <Chevron w={4} />
          </Combo>
          <Quick
            w={116}
            on={9}
            items={[brushIcon, eyedropIcon, snapIcon(B), snapIcon(W), snapIcon(B), snapIcon("#e8c33a"), panelIcon, triIcon, gearIcon, slidersSmall, consoleIcon]}
          />
          <Combo $w={42} $h={11} $gap={0}>
            <select aria-label="Visual style">
              <option>2dWireframe</option>
            </select>
            <Chevron w={4} />
          </Combo>
        </QuickBar>
        <TabBar>
          <IconButton $w={11} $h={13} aria-label="New drawing">
            {icons.newDoc}
          </IconButton>
          <IconButton $w={10} aria-label="More">
            <Chevron w={6} />
          </IconButton>
          <TabStrip>
            {tabs.map((t) => (
              <RibbonTab key={t} $on={t === "Home"}>
                {t}
              </RibbonTab>
            ))}
          </TabStrip>
          <Spacer />
          <Search>
            {icons.lens}
            <input type="search" placeholder="Search in Ribbon" aria-label="Search in Ribbon" />
          </Search>
          <IconButton $w={11} $h={11} aria-label="Ribbon layout">
            {icons.layout}
          </IconButton>
        </TabBar>
        <RibbonRow>
          <RibbonGrip>
            <Grip />
          </RibbonGrip>
          <Ribbon>
            <Group $w={121}>
              <Tools>
                <Big w={26} icon={icons.line} label="Line" />
                <Big w={26} icon={icons.polyline} label="Polyline" caret />
                <Big w={25} icon={icons.circle} label="Circle" caret />
                <Big w={25} icon={icons.arc} label="Arc" caret />
                <Column $w={18}>
                  <Small icon={icons.rect} caret />
                  <Small icon={icons.ellipse} caret />
                  <Small icon={icons.hatch} caret />
                </Column>
              </Tools>
              <Title>DRAW</Title>
            </Group>
            <Group $w={127}>
              <Tools $pad={3}>
                <Column $w={38}>
                  <Small icon={icons.move} label="Move" caret />
                  <Small icon={icons.copy} label="Copy" caret />
                  <Small icon={icons.stretch} label="Stretch" />
                </Column>
                <Column $w={36}>
                  <Small icon={icons.rotate} label="Rotate" />
                  <Small icon={icons.mirror} label="Mirror" />
                  <Small icon={icons.scale} label="Scale" />
                </Column>
                <Column $w={39}>
                  <Small icon={icons.trim} label="Trim" caret />
                  <Small icon={icons.fillet} label="Fillet" caret />
                  <Small icon={icons.array} label="Array" caret />
                </Column>
                <Column $w={9}>
                  <Small icon={icons.erase} />
                  <Small icon={icons.cube} />
                  <Small icon={icons.pipe} />
                </Column>
              </Tools>
              <Title>MODIFY</Title>
            </Group>
            <Group $w={110}>
              <Tools $pad={2}>
                <Big
                  w={30}
                  icon={icons.mtext}
                  dense
                  caret
                  label={
                    <>
                      Multiline
                      <br />
                      Text
                    </>
                  }
                />
                <Big w={34} icon={icons.dimension} label="Dimension" />
                <Column $w={40}>
                  <Small icon={icons.linear} label="Linear" caret />
                  <Small icon={icons.leader} label="Leader" caret />
                  <Small icon={icons.table} label="Table" />
                </Column>
              </Tools>
              <Title>ANNOTATIONS</Title>
            </Group>
            <Group $w={163}>
              <Tools>
                <Big w={26} icon={icons.layers} label="Layers" />
                <Column $w={134}>
                  <Combo $gap={2}>
                    {icons.bulb}
                    {icons.sun}
                    {icons.lock}
                    {icons.printer}
                    <Swatch $c="#ff00ff" $s={7} />
                    <select aria-label="Current layer">
                      <option>1 - Raptor crane supp...</option>
                    </select>
                    <Chevron />
                  </Combo>
                  <LayerGrid>
                    <Small icon={layerIcon(B)} />
                    <Small icon={layerIcon(B, true)} />
                    <Small icon={layerIcon(B)} />
                    <Small icon={layerIcon(O)} />
                    <Small icon={stackIcon(B)} label="Make Current" />
                    <Small icon={stackIcon(O)} />
                    <Small icon={stackIcon(W)} />
                    <Small icon={stackIcon(O)} />
                    <Small icon={layerIcon(B)} />
                    <Small icon={matchLayerIcon} label="Match Layer" />
                  </LayerGrid>
                </Column>
              </Tools>
              <Title>LAYERS</Title>
            </Group>
            <Group $w={117}>
              <Tools>
                <Big w={27} icon={icons.insert} label="Insert" />
                <Big w={27} icon={icons.blockify} label="Blockify" />
                <Column $w={62}>
                  <Small icon={icons.create} label="Create" />
                  <Small icon={icons.edit} label="Edit" />
                  <Small icon={icons.attrs} label="Edit Attributes" caret />
                </Column>
              </Tools>
              <Title>BLOCKS</Title>
            </Group>
            <Group $w={162}>
              <Tools>
                <Big w={30} icon={icons.match} label="Match" />
                <Column $w={98}>
                  <Stack>
                    <StyleRow>
                      {icons.wheel}
                      <Combo $w={86}>
                        <Swatch $c="#ff00ff" $s={6} />
                        <select aria-label="Color">
                          <option>ByLayer</option>
                        </select>
                        <Chevron />
                      </Combo>
                    </StyleRow>
                    <StyleRow>
                      {icons.weight}
                      <Combo $w={86}>
                        <LineSample $w={27} $h={1} />
                        <select aria-label="Lineweight">
                          <option>ByLayer</option>
                        </select>
                        <Chevron />
                      </Combo>
                    </StyleRow>
                    <StyleRow>
                      {icons.ltype}
                      <Combo $w={86}>
                        <LineSample $w={27} $h={1} />
                        <select aria-label="Linetype">
                          <option>ByLayer</option>
                        </select>
                        <Chevron />
                      </Combo>
                    </StyleRow>
                  </Stack>
                </Column>
                <Big w={32} icon={icons.sliders} label="Properties" on />
              </Tools>
              <Title>PROPERTIES</Title>
            </Group>
            <Group $w={45}>
              <Tools>
                <Big w={28} icon={icons.group} label="Group..." />
                <Column $w={14}>
                  <Small icon={icons.ungroup} />
                  <Small icon={icons.groupEdit} />
                  <IconButton $w={15} $h={13} $on aria-label="Group selection">
                    {icons.groupOn}
                  </IconButton>
                </Column>
              </Tools>
              <Title menu={false}>GROUPS</Title>
            </Group>
            <Group $w={46}>
              <Tools>
                <Big w={32} icon={icons.measure} label="Measure" caret />
                <Column $w={10}>
                  <Small icon={icons.filterBolt} />
                  <Small icon={icons.selectBox} />
                  <Small icon={icons.calc} />
                </Column>
              </Tools>
              <Title>UTILITIES</Title>
            </Group>
            <Group $w={45}>
              <Tools>
                <Big w={27} icon={icons.paste} label="Paste" caret />
                <Column $w={17} $top={4}>
                  <Small icon={icons.cut} />
                  <Small icon={null} />
                  <Small icon={icons.copyClip} caret />
                </Column>
              </Tools>
              <Title menu={false}>CLIPBOARD</Title>
            </Group>
          </Ribbon>
        </RibbonRow>
      </AppWindow>

      <Monitor>
        <Canvas>
          <Drawing />
          <Dock>
            <DockList>
              <DockButton aria-label="Tips">
                <Ico w={16} h={20}>
                  <path d="M5.500 14C5.500 11.500 1.500 11 1.500 7a6.500 6.500 0 0 1 13 0c0 4-4 4.500-4 7z" />
                  <path d="M5.500 15.500l5-1M5.500 17.500l5-1M6.500 19h3" />
                </Ico>
              </DockButton>
              <DockButton $on aria-label="Assistant">
                <Ico w={22} h={22}>
                  <path d="M10 5H4.500A2.500 2.500 0 0 0 2 7.500v6A2.500 2.500 0 0 0 4.500 16v4l4-3.500h8a2.500 2.500 0 0 0 2.500-2.500v-1" />
                  <g stroke="none">
                    <path d="M16 2c.8 3.500 1.500 4.200 5 5-3.500.8-4.200 1.500-5 5-.8-3.500-1.500-4.200-5-5 3.500-.8 4.200-1.500 5-5z" fill="#a79af0" />
                    <path d="M12.500 0l.6 1.900L15 2.500l-1.900.6-.6 1.900-.6-1.900L10 2.500l1.900-.6zM19.500 9l.5 1.500 1.500.5-1.500.5-.5 1.500-.5-1.500-1.500-.5 1.500-.5z" fill="#8a8df0" />
                  </g>
                </Ico>
              </DockButton>
              <DockButton aria-label="Filter">
                <Ico w={20} h={22}>
                  <path d="M1 1.500h18L12 10v11l-4-4v-7z" />
                </Ico>
              </DockButton>
            </DockList>
          </Dock>
          <ViewRing>
            <ViewFace>TOP</ViewFace>
          </ViewRing>
          <Prompt>Enter new point [Options]:</Prompt>
        </Canvas>
      </Monitor>

      <UcsIcon width="104" height="106" viewBox="14 523 104 106" fontFamily="Roboto, sans-serif" fontWeight="300" fontSize="20" aria-label="Coordinate axes">
        <text x="16" y="541" fill="#63cd8d">
          Y
        </text>
        <text x="103" y="627" fill="#ff7373">
          X
        </text>
        <path d="M23 596.500H49M23 622H49" stroke="#ff4545" strokeWidth="2" />
        <path d="M23.500 596V622M49.500 595.500V621" stroke="#2fbd6e" strokeWidth="2" />
      </UcsIcon>

      <PropsPanel>
        <PropsMain>
          <PropsHead>
            <Combo $w={125} $h={12}>
              <select aria-label="Selection">
                <option>Block Reference</option>
              </select>
              <Chevron w={4} />
            </Combo>
            <IconButton $w={13} $h={12} aria-label="Quick select">
              {icons.filterBolt}
            </IconButton>
            <IconButton $w={11} $h={11} $on aria-label="Show preview">
              {eyeIcon}
            </IconButton>
          </PropsHead>
          <PropTable>
            <colgroup>
              <col style={{ width: 9 }} />
              <col style={{ width: 50 }} />
              <col />
            </colgroup>
            <tbody>
              {props.map((p, i) =>
                p.head ? (
                  <SectionRow key={i}>
                    <Gutter>
                      <Toggle aria-label={`Collapse ${p.name}`} />
                    </Gutter>
                    <SectionHead colSpan={2}>{p.name}</SectionHead>
                  </SectionRow>
                ) : (
                  <tr key={i}>
                    <Gutter>{p.toggle && <Toggle aria-label={`Collapse ${p.name}`} />}</Gutter>
                    <Name scope="row" $sub={p.sub}>
                      {p.name}
                    </Name>
                    <Value $dim={p.dim}>
                      <span>
                        {p.kind === "color" && <Swatch $c="#fff" $s={8} />}
                        {p.kind === "thin" && <LineSample $w={46} $h={1} />}
                        {p.kind === "thick" && <LineSample $w={46} $h={2} />}
                        {p.value}
                      </span>
                    </Value>
                  </tr>
                )
              )}
            </tbody>
          </PropTable>
        </PropsMain>
        <SideTabs>
          {sideIcons.map(([label, icon], i) => (
            <SideTab key={label} $on={i === 0} aria-label={label}>
              {icon ?? (
                <svg width="18" height="12" fill="#d4d7da" fontFamily="Liberation Serif, serif" fontStyle="italic" fontWeight="700" fontSize="9" aria-hidden="true">
                  <text x="2" y="9">
                    f(x)
                  </text>
                </svg>
              )}
            </SideTab>
          ))}
        </SideTabs>
      </PropsPanel>
    </Page>
  );
}
